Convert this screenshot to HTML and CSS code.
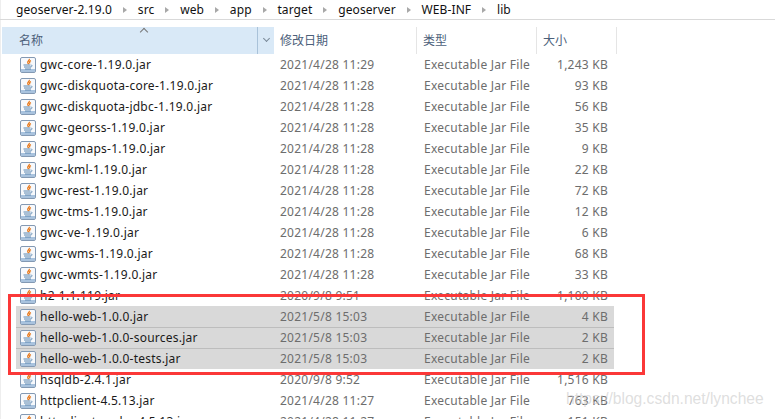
FILE: index.html
```html
<!DOCTYPE html>
<html lang="zh">
<head>
<meta charset="utf-8">
<title>lib</title>
<link rel="stylesheet" href="styles.css">
</head>
<body>
<svg class="defs" width="0" height="0" aria-hidden="true">
  <symbol id="jar" viewBox="0 0 16 16">
    <rect x="0.5" y="0.5" width="15" height="15" rx="1.5" fill="#f7f9fc" stroke="#8399b3"/>
    <path d="M1 12h14v3H1z" fill="#a9c3de"/>
    <path d="M9.2 1.8c.9 1.4-2.6 2.6-1.3 4.3.3.4.6.6.8 1M11 3.6c-1.6.6-1.8 1.6-1 2.8" fill="none" stroke="#e8781a" stroke-width="1.3"/>
    <path d="M3.5 8h7M4 10h7M5 12h6" fill="none" stroke="#5a86b0" stroke-width="1"/>
    <path d="M11 8.2c1.6-.3 1.6 1.4-.2 1.7" fill="none" stroke="#5a86b0" stroke-width=".8"/>
  </symbol>
</svg>
<nav class="crumbs">
  <span>geoserver-2.19.0</span><i class="sep"></i>
  <span>src</span><i class="sep"></i>
  <span>web</span><i class="sep"></i>
  <span>app</span><i class="sep"></i>
  <span>target</span><i class="sep"></i>
  <span>geoserver</span><i class="sep"></i>
  <span>WEB-INF</span><i class="sep"></i>
  <span>lib</span>
</nav>
<div class="header">
  <div class="h-name"><span>名称</span><i class="sort"></i><b class="drop"><i class="chev"></i></b></div>
  <div class="h-date">修改日期</div>
  <div class="h-type">类型</div>
  <div class="h-size">大小</div>
</div>
<div class="list">
  <div class="row"><svg class="ico"><use href="#jar"/></svg><span class="n">gwc-core-1.19.0.jar</span><span class="d">2021/4/28 11:29</span><span class="t">Executable Jar File</span><span class="s">1,243 KB</span></div>
  <div class="row"><svg class="ico"><use href="#jar"/></svg><span class="n">gwc-diskquota-core-1.19.0.jar</span><span class="d">2021/4/28 11:28</span><span class="t">Executable Jar File</span><span class="s">93 KB</span></div>
  <div class="row"><svg class="ico"><use href="#jar"/></svg><span class="n">gwc-diskquota-jdbc-1.19.0.jar</span><span class="d">2021/4/28 11:28</span><span class="t">Executable Jar File</span><span class="s">56 KB</span></div>
  <div class="row"><svg class="ico"><use href="#jar"/></svg><span class="n">gwc-georss-1.19.0.jar</span><span class="d">2021/4/28 11:28</span><span class="t">Executable Jar File</span><span class="s">35 KB</span></div>
  <div class="row"><svg class="ico"><use href="#jar"/></svg><span class="n">gwc-gmaps-1.19.0.jar</span><span class="d">2021/4/28 11:28</span><span class="t">Executable Jar File</span><span class="s">9 KB</span></div>
  <div class="row"><svg class="ico"><use href="#jar"/></svg><span class="n">gwc-kml-1.19.0.jar</span><span class="d">2021/4/28 11:28</span><span class="t">Executable Jar File</span><span class="s">22 KB</span></div>
  <div class="row"><svg class="ico"><use href="#jar"/></svg><span class="n">gwc-rest-1.19.0.jar</span><span class="d">2021/4/28 11:28</span><span class="t">Executable Jar File</span><span class="s">72 KB</span></div>
  <div class="row"><svg class="ico"><use href="#jar"/></svg><span class="n">gwc-tms-1.19.0.jar</span><span class="d">2021/4/28 11:28</span><span class="t">Executable Jar File</span><span class="s">12 KB</span></div>
  <div class="row"><svg class="ico"><use href="#jar"/></svg><span class="n">gwc-ve-1.19.0.jar</span><span class="d">2021/4/28 11:28</span><span class="t">Executable Jar File</span><span class="s">6 KB</span></div>
  <div class="row"><svg class="ico"><use href="#jar"/></svg><span class="n">gwc-wms-1.19.0.jar</span><span class="d">2021/4/28 11:28</span><span class="t">Executable Jar File</span><span class="s">68 KB</span></div>
  <div class="row"><svg class="ico"><use href="#jar"/></svg><span class="n">gwc-wmts-1.19.0.jar</span><span class="d">2021/4/28 11:28</span><span class="t">Executable Jar File</span><span class="s">33 KB</span></div>
  <div class="row"><svg class="ico"><use href="#jar"/></svg><span class="n">h2-1.1.119.jar</span><span class="d">2020/9/8 9:51</span><span class="t">Executable Jar File</span><span class="s">1,100 KB</span></div>
  <div class="row sel"><svg class="ico"><use href="#jar"/></svg><span class="n">hello-web-1.0.0.jar</span><span class="d">2021/5/8 15:03</span><span class="t">Executable Jar File</span><span class="s">4 KB</span></div>
  <div class="row sel"><svg class="ico"><use href="#jar"/></svg><span class="n">hello-web-1.0.0-sources.jar</span><span class="d">2021/5/8 15:03</span><span class="t">Executable Jar File</span><span class="s">2 KB</span></div>
  <div class="row sel"><svg class="ico"><use href="#jar"/></svg><span class="n">hello-web-1.0.0-tests.jar</span><span class="d">2021/5/8 15:03</span><span class="t">Executable Jar File</span><span class="s">2 KB</span></div>
  <div class="row"><svg class="ico"><use href="#jar"/></svg><span class="n">hsqldb-2.4.1.jar</span><span class="d">2020/9/8 9:52</span><span class="t">Executable Jar File</span><span class="s">1,516 KB</span></div>
  <div class="row"><svg class="ico"><use href="#jar"/></svg><span class="n">httpclient-4.5.13.jar</span><span class="d">2021/4/28 11:27</span><span class="t">Executable Jar File</span><span class="s">763 KB</span></div>
  <div class="row"><svg class="ico"><use href="#jar"/></svg><span class="n">httpclient-cache-4.5.13.jar</span><span class="d">2021/4/28 11:27</span><span class="t">Executable Jar File</span><span class="s">151 KB</span></div>
</div>
<div class="redbox"></div>
<div class="mark">https://blog.csdn.net/lynchee</div>
</body>
</html>
```
FILE: styles.css
```css
html, body { margin: 0; padding: 0; }
body {
  width: 775px; height: 419px; overflow: hidden; position: relative; background: #fff;
  font-family: "Noto Sans", "Noto Sans CJK SC", sans-serif; font-size: 12px; color: #1a1a1a;
  box-shadow: inset 1px 0 0 #eeeeee;
}
.defs { position: absolute; }
.crumbs {
  height: 19px; box-sizing: border-box; display: flex; align-items: center;
  padding-left: 16px; gap: 10.9px; letter-spacing: .1px; color: #111;
  box-shadow: 0 1px 0 #d9d9d9;
}
.sep {
  width: 0; height: 0; border-left: 4px solid #a8a8a8; border-top: 3.5px solid transparent; border-bottom: 3.5px solid transparent;
}
.header {
  margin-top: 8px; height: 27px; display: flex; color: #4c607a; line-height: 28px;
}
.header > div { box-sizing: border-box; position: relative; }
.h-name {
  margin-left: 2px; width: 272px; background: #d9e9f7; padding-left: 17px; display: flex;
}
.h-name span { flex: 1; }
.sort {
  position: absolute; left: 139px; top: 2px; width: 5px; height: 5px;
  border-left: 1px solid #777; border-top: 1px solid #777; transform: rotate(45deg);
}
.drop { width: 16px; border-left: 1px solid #a9c2d9; display: flex; justify-content: center; }
.chev {
  width: 4px; height: 4px; margin-top: 9px; border-right: 1px solid #7a8a99; border-bottom: 1px solid #7a8a99; transform: rotate(45deg);
}
.h-date { width: 143px; padding-left: 6px; }
.h-type { width: 120px; padding-left: 6px; }
.h-size { width: 80px; padding-left: 6px; }
.h-date, .h-type, .h-size { border-right: 1px solid #e5e5e5; height: 27px; }
.list { margin-left: 16px; width: 598px; }
.row {
  height: 21px; display: flex; align-items: center; color: #6d6d6d; letter-spacing: .24px;
}
.ico { width: 16px; height: 16px; margin-left: 4px; flex: none; }
.n { width: 240px; margin-left: 4px; color: #1a1a1a; white-space: nowrap; }
.d { width: 144px; white-space: nowrap; }
.t { width: 130px; white-space: nowrap; }
.s { width: 54px; text-align: right; white-space: nowrap; }
.sel { background: #d9d9d9; }
.sel + .sel { box-shadow: inset 0 1px 0 #bdbdbd; }
.redbox {
  position: absolute; left: 8px; top: 294px; width: 631px; height: 75px; border: 3px solid #fb3838; pointer-events: none;
}
.mark {
  position: absolute; left: 566px; top: 390px; font-family: "Liberation Sans", sans-serif; font-size: 15.6px; color: rgba(205,205,205,.65);
}
```
